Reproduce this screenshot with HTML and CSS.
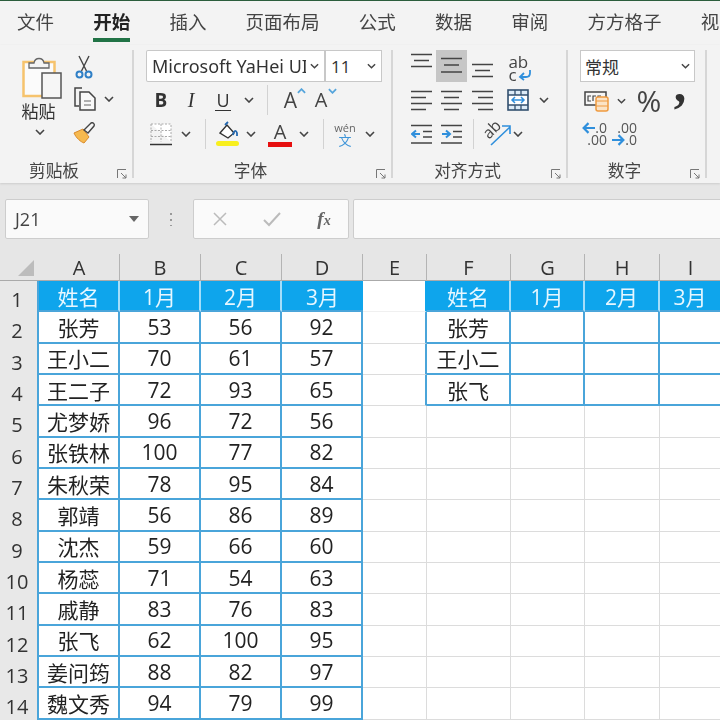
FILE: index.html
```html
<!DOCTYPE html>
<html lang="zh-CN">
<head>
    <meta charset="UTF-8">
    <meta name="viewport" content="width=device-width, initial-scale=1.0">
    <title>Excel</title>
    <link rel="stylesheet" href="styles.css">
</head>
<body>
    <svg class="defs" width="0" height="0">
        <symbol id="chev" viewBox="0 0 10 6"><polyline points="1,1 5,5 9,1" fill="none" stroke="#444" stroke-width="1.6"/></symbol>
        <symbol id="launch" viewBox="0 0 10 10"><path d="M.5 9V.5H9M4 4l5 5M9 5.5V9H5.5" fill="none" stroke="#777" stroke-width="1"/></symbol>
    </svg>

    <div class="tabs">
        <span>文件</span><span class="tab-on">开始</span><span>插入</span><span>页面布局</span><span>公式</span><span>数据</span><span>审阅</span><span>方方格子</span><span>视图</span>
    </div>

    <div class="ribbon">
        <!-- 剪贴板 -->
        <section class="group g-clip">
            <div class="clip-body">
                <div class="paste">
                    <svg width="46" height="46" viewBox="0 0 46 46">
                        <rect x="3.5" y="8" width="31" height="34" fill="#fbfbfb" stroke="#f6c36d" stroke-width="2.5"/>
                        <path d="M9 14V9h5c1-6 9-6 10 0h5v5z" fill="#f4f4f4" stroke="#666" stroke-width="1.3"/>
                        <rect x="22" y="19" width="19" height="25" fill="#f6f6f6" stroke="#555" stroke-width="1.5"/>
                    </svg>
                    <span class="paste-label">粘贴</span>
                    <svg class="chev" width="10" height="6"><use href="#chev"/></svg>
                </div>
                <div class="clip-tools">
                    <svg class="tool-cut" width="18" height="24" viewBox="0 0 18 24">
                        <path d="M4 1l7.5 15M14 1L6.500 16" stroke="#444" stroke-width="1.4" fill="none"/>
                        <circle cx="4.500" cy="19.500" r="3" fill="none" stroke="#2f7fc6" stroke-width="2"/>
                        <circle cx="13.500" cy="19.500" r="3" fill="none" stroke="#2f7fc6" stroke-width="2"/>
                    </svg>
                    <div class="copy-row">
                        <svg width="24" height="24" viewBox="0 0 24 24">
                            <path d="M9 1H2v18h4" fill="none" stroke="#444" stroke-width="1.5"/>
                            <path d="M7 5h9l6 6v12H7z" fill="#f8f8f8" stroke="#444" stroke-width="1.5"/>
                            <path d="M11 14h7M11 18h7" stroke="#666" stroke-width="1.2"/>
                        </svg>
                        <svg class="chev" width="10" height="6"><use href="#chev"/></svg>
                    </div>
                    <svg class="tool-brush" width="24" height="22" viewBox="0 0 24 22">
                        <path d="M1 11l9-4 6 8-5 6C8 20 3 16 1 11z" fill="#f6b94f" stroke="#d98a2b" stroke-width="1"/>
                        <path d="M11 8l7-7c2-1 4 1 3 3l-6 7z" fill="#f6f6f6" stroke="#444" stroke-width="1.4"/>
                    </svg>
                </div>
            </div>
            <footer class="group-foot"><i></i><span>剪贴板</span><svg class="launch" width="10" height="10"><use href="#launch"/></svg></footer>
        </section>

        <!-- 字体 -->
        <section class="group g-font">
            <div class="font-boxes">
                <div class="box font-name"><span class="font-text">Microsoft YaHei UI</span><svg width="9" height="6"><use href="#chev"/></svg></div>
                <div class="box font-size"><span>11</span><svg width="9" height="6"><use href="#chev"/></svg></div>
            </div>
            <div class="tool-row font-row2">
                <b class="t-b">B</b>
                <span class="t-i">I</span>
                <span class="t-u">U</span>
                <svg width="10" height="6"><use href="#chev"/></svg>
                <i class="sep"></i>
                <span class="t-a">A<svg class="t-caret" width="9" height="6" viewBox="0 0 10 6"><polyline points="1,5 5,1 9,5" fill="none" stroke="#55a5dc" stroke-width="2"/></svg></span>
                <span class="t-a t-a-small">A<svg class="t-caret" width="9" height="6" viewBox="0 0 10 6"><polyline points="1,1 5,5 9,1" fill="none" stroke="#55a5dc" stroke-width="2"/></svg></span>
            </div>
            <div class="tool-row font-row3">
                <svg width="22" height="23" viewBox="0 0 22 23">
                    <path d="M1 1h20v18M1 1v18M1 7.500h20M1 13.500h20M11 1v18" fill="#fff" stroke="#aaa" stroke-width="1" stroke-dasharray="2 1.500"/>
                    <path d="M0 21.500h22" stroke="#333" stroke-width="1.500"/>
                </svg>
                <svg width="10" height="6"><use href="#chev"/></svg>
                <i class="sep"></i>
                <svg width="25" height="26" viewBox="0 0 25 26">
                    <path d="M5 12l7-8 7 8-6 5z" fill="#fff" stroke="#333" stroke-width="1.400"/>
                    <path d="M10 4l3-3M18 14c1-5 3-5 4-2v3" fill="none" stroke="#2468b0" stroke-width="1.800"/>
                    <rect x="1" y="20" width="23" height="5" rx="2.500" fill="#f8ef1e"/>
                </svg>
                <svg width="10" height="6"><use href="#chev"/></svg>
                <span class="t-color">A</span>
                <svg width="10" height="6"><use href="#chev"/></svg>
                <i class="sep"></i>
                <span class="t-wen"><span>wén</span><em>文</em></span>
                <svg width="10" height="6"><use href="#chev"/></svg>
            </div>
            <footer class="group-foot"><i></i><span>字体</span><svg class="launch" width="10" height="10"><use href="#launch"/></svg></footer>
        </section>

        <!-- 对齐方式 -->
        <section class="group g-align">
            <div class="tool-row align-row1">
                <svg width="21" height="32" viewBox="0 0 21 32"><path d="M0 4.500h21M3 10.500h15M0 16.500h21" stroke="#444" stroke-width="1.500"/></svg>
                <span class="align-on"><svg width="21" height="32" viewBox="0 0 21 32"><path d="M0 8.500h21M3 15h15M0 22h21" stroke="#444" stroke-width="1.500"/></svg></span>
                <svg width="21" height="32" viewBox="0 0 21 32"><path d="M0 14.500h21M3 20.500h15M0 26.500h21" stroke="#444" stroke-width="1.500"/></svg>
                <span class="t-wrap"><span>ab</span><span class="wrap-c">c<svg width="14" height="12" viewBox="0 0 14 12"><path d="M12 1v3c0 3-2 4-4 4H2M6 4L2 8l4 3" fill="none" stroke="#2f8fdc" stroke-width="1.800"/></svg></span></span>
            </div>
            <div class="tool-row align-row2">
                <svg width="21" height="22" viewBox="0 0 21 22"><path d="M0 2.500h21M0 8.500h15M0 14.500h21M0 20.500h15" stroke="#444" stroke-width="1.500"/></svg>
                <svg width="21" height="22" viewBox="0 0 21 22"><path d="M0 2.500h21M3 8.500h15M0 14.500h21M3 20.500h15" stroke="#444" stroke-width="1.500"/></svg>
                <svg width="21" height="22" viewBox="0 0 21 22"><path d="M0 2.500h21M6 8.500h15M0 14.500h21M6 20.500h15" stroke="#444" stroke-width="1.500"/></svg>
                <svg width="22" height="22" viewBox="0 0 22 22">
                    <rect x="1" y="1" width="20" height="20" fill="#dcebf7" stroke="#33506f" stroke-width="1.600"/>
                    <rect x="2" y="6" width="18" height="10" fill="#fff"/>
                    <path d="M1 6h20M1 16h20M8 1v5M14 1v5M8 16v5M14 16v5" stroke="#33506f" stroke-width="1.300"/>
                    <path d="M5 11h12M8 8l-3 3 3 3M14 8l3 3-3 3" fill="none" stroke="#2f8fdc" stroke-width="1.500"/>
                </svg>
                <svg width="10" height="6"><use href="#chev"/></svg>
            </div>
            <div class="tool-row align-row3">
                <svg width="21" height="20" viewBox="0 0 21 20"><path d="M0 1.500h21M12 7.500h9M12 13h9M0 19h21" stroke="#444" stroke-width="1.500"/><path d="M1 10h8M5 6.500L1 10l4 3.500" fill="none" stroke="#2f8fdc" stroke-width="2"/></svg>
                <svg width="21" height="20" viewBox="0 0 21 20"><path d="M0 1.500h21M12 7.500h9M12 13h9M0 19h21" stroke="#444" stroke-width="1.500"/><path d="M1 10h8M5 6.500L9 10l-4 3.500" fill="none" stroke="#2f8fdc" stroke-width="2"/></svg>
                <i class="sep"></i>
                <span class="t-orient"><span>ab</span><svg width="22" height="22" viewBox="0 0 22 22"><path d="M1 21L20 3M12 2h8v8" fill="none" stroke="#2f8fdc" stroke-width="1.600"/></svg></span>
                <svg width="10" height="6"><use href="#chev"/></svg>
            </div>
            <footer class="group-foot"><i></i><span>对齐方式</span><svg class="launch" width="10" height="10"><use href="#launch"/></svg></footer>
        </section>

        <!-- 数字 -->
        <section class="group g-num">
            <div class="box num-format"><span>常规</span><svg width="9" height="6"><use href="#chev"/></svg></div>
            <div class="tool-row num-row2">
                <svg width="25" height="23" viewBox="0 0 25 23">
                    <rect x="1" y="3" width="21" height="13" fill="#f6f6f6" stroke="#444" stroke-width="1.500"/>
                    <path d="M7 7H4v5h3M12 7H9v5M17 7h-3v5" fill="none" stroke="#444" stroke-width="1.200"/>
                    <rect x="12" y="8" width="12" height="14" rx="2" fill="#fbe3c6" stroke="#ef9a3f" stroke-width="1.500"/>
                    <path d="M12 12h12M12 17h12" stroke="#ef9a3f" stroke-width="1.200"/>
                </svg>
                <svg width="9" height="6"><use href="#chev"/></svg>
                <span class="t-pct">%</span>
                <span class="t-comma">,</span>
            </div>
            <div class="tool-row num-row3">
                <span class="t-dec"><span class="dec-top"><svg width="13" height="12" viewBox="0 0 12 11"><path d="M12 5.500H2M6 1L1.500 5.500 6 10" fill="none" stroke="#2f8fdc" stroke-width="2"/></svg>.0</span><span>.00</span></span>
                <span class="t-dec t-dec-right"><span>.00</span><span class="dec-top"><svg width="13" height="12" viewBox="0 0 12 11"><path d="M0 5.500h10M6 1l4.500 4.500L6 10" fill="none" stroke="#2f8fdc" stroke-width="2"/></svg>.0</span></span>
            </div>
            <footer class="group-foot"><i></i><span>数字</span><svg class="launch" width="10" height="10"><use href="#launch"/></svg></footer>
        </section>
    </div>

    <div class="formula-bar">
        <div class="name-box"><span>J21</span><i class="down-arrow"></i></div>
        <div class="dots"></div>
        <div class="fx-buttons">
            <svg width="16" height="16" viewBox="0 0 16 16"><path d="M2 2l12 12M14 2L2 14" stroke="#bbb" stroke-width="1.500"/></svg>
            <svg width="20" height="16" viewBox="0 0 20 16"><path d="M2 9l5 5L18 2" fill="none" stroke="#bbb" stroke-width="2"/></svg>
            <span class="fx"><i>f</i><i>x</i></span>
        </div>
        <div class="fx-input"></div>
    </div>

    <div class="sheet">
        <div class="corner"><i></i></div>
        <div class="col">A</div><div class="col">B</div><div class="col">C</div><div class="col">D</div><div class="col">E</div><div class="col">F</div><div class="col">G</div><div class="col">H</div><div class="col">I</div>

        <div class="row">1</div>
        <div class="c th">姓名</div><div class="c th">1月</div><div class="c th">2月</div><div class="c th th-end">3月</div>
        <div class="c e-top"></div>
        <div class="c th">姓名</div><div class="c th">1月</div><div class="c th">2月</div><div class="c th">3月</div>

        <div class="row">2</div>
        <div class="c t">张芳</div><div class="c t">53</div><div class="c t">56</div><div class="c t">92</div>
        <div class="c e-edge"></div>
        <div class="c t">张芳</div><div class="c t"></div><div class="c t"></div><div class="c t"></div>

        <div class="row">3</div>
        <div class="c t">王小二</div><div class="c t">70</div><div class="c t">61</div><div class="c t">57</div>
        <div class="c e-edge"></div>
        <div class="c t">王小二</div><div class="c t"></div><div class="c t"></div><div class="c t"></div>

        <div class="row">4</div>
        <div class="c t">王二子</div><div class="c t">72</div><div class="c t">93</div><div class="c t">65</div>
        <div class="c e-edge"></div>
        <div class="c t">张飞</div><div class="c t"></div><div class="c t"></div><div class="c t"></div>

        <div class="row">5</div>
        <div class="c t">尤梦娇</div><div class="c t">96</div><div class="c t">72</div><div class="c t">56</div>
        <div class="c"></div><div class="c"></div><div class="c"></div><div class="c"></div><div class="c"></div>

        <div class="row">6</div>
        <div class="c t">张铁林</div><div class="c t">100</div><div class="c t">77</div><div class="c t">82</div>
        <div class="c"></div><div class="c"></div><div class="c"></div><div class="c"></div><div class="c"></div>

        <div class="row">7</div>
        <div class="c t">朱秋荣</div><div class="c t">78</div><div class="c t">95</div><div class="c t">84</div>
        <div class="c"></div><div class="c"></div><div class="c"></div><div class="c"></div><div class="c"></div>

        <div class="row">8</div>
        <div class="c t">郭靖</div><div class="c t">56</div><div class="c t">86</div><div class="c t">89</div>
        <div class="c"></div><div class="c"></div><div class="c"></div><div class="c"></div><div class="c"></div>

        <div class="row">9</div>
        <div class="c t">沈杰</div><div class="c t">59</div><div class="c t">66</div><div class="c t">60</div>
        <div class="c"></div><div class="c"></div><div class="c"></div><div class="c"></div><div class="c"></div>

        <div class="row">10</div>
        <div class="c t">杨蕊</div><div class="c t">71</div><div class="c t">54</div><div class="c t">63</div>
        <div class="c"></div><div class="c"></div><div class="c"></div><div class="c"></div><div class="c"></div>

        <div class="row">11</div>
        <div class="c t">戚静</div><div class="c t">83</div><div class="c t">76</div><div class="c t">83</div>
        <div class="c"></div><div class="c"></div><div class="c"></div><div class="c"></div><div class="c"></div>

        <div class="row">12</div>
        <div class="c t">张飞</div><div class="c t">62</div><div class="c t">100</div><div class="c t">95</div>
        <div class="c"></div><div class="c"></div><div class="c"></div><div class="c"></div><div class="c"></div>

        <div class="row">13</div>
        <div class="c t">姜问筠</div><div class="c t">88</div><div class="c t">82</div><div class="c t">97</div>
        <div class="c"></div><div class="c"></div><div class="c"></div><div class="c"></div><div class="c"></div>

        <div class="row">14</div>
        <div class="c t">魏文秀</div><div class="c t">94</div><div class="c t">79</div><div class="c t">99</div>
        <div class="c"></div><div class="c"></div><div class="c"></div><div class="c"></div><div class="c"></div>
    </div>
</body>
</html>
```

FILE: styles.css
```css
* {
    box-sizing: border-box;
}
html, body {
    margin: 0;
    height: 720px;
    overflow: hidden;
}
body {
    width: 720px;
    background: #e6e6e6;
    color: #333;
    font-family: "Open Sans", "Noto Sans CJK SC", sans-serif;
    filter: blur(.35px);
}
.defs {
    position: absolute;
}
svg {
    display: block;
}

/* tabs */
.tabs {
    height: 45px;
    display: flex;
    gap: 39.2px;
    padding: 5px 0 0 17px;
    border-top: 1px solid #2b5d3c;
    background: #f3f3f3;
    font-family: "Noto Sans CJK SC", sans-serif;
    font-size: 18.500px;
    line-height: 30px;
    color: #444;
    white-space: nowrap;
}
.tabs span {
    flex: none;
    height: 36px;
}
.tabs .tab-on {
    font-weight: 700;
    color: #222;
    border-bottom: 4px solid #217346;
}

/* ribbon */
.ribbon {
    height: 138px;
    display: flex;
    padding: 5px 0 5px;
    background: #f3f3f3;
    box-shadow: 0 1px 2px #ccc;
    position: relative;
}
.group {
    flex: none;
    display: grid;
    grid-template-rows: 33px 34px 34px 1fr;
    border-right: 2px solid #d6d6d6;
}
.g-clip { width: 134px; grid-template-rows: 1fr 27px; }
.g-font { width: 259px; padding-left: 12px; }
.g-align { width: 175px; padding-left: 13px; }
.g-num { width: 139px; padding-left: 12px; }

.group-foot {
    display: grid;
    grid-template-columns: 1fr auto 1fr;
    align-items: center;
    align-self: end;
    margin-bottom: -3px;
    padding: 0 5px 0 0;
    font-family: "Noto Sans CJK SC", sans-serif;
    font-size: 16.700px;
    line-height: 22px;
    color: #444;
}
.group-foot span {
    margin-right: 19px;
}
.g-font .group-foot, .g-num .group-foot {
    margin-left: -12px;
}
.g-align .group-foot {
    margin-left: -13px;
}
.launch {
    justify-self: end;
    margin-top: 8px;
}

/* clipboard */
.clip-body {
    display: flex;
    padding: 4px 0 0 20px;
}
.paste {
    width: 46px;
    display: flex;
    flex-direction: column;
    align-items: center;
}
.paste-label {
    font-family: "Noto Sans CJK SC", sans-serif;
    font-size: 17px;
    line-height: 24px;
    margin: -1px 9px 0 0;
}
.paste .chev {
    margin: 6px 6px 0 0;
}
.clip-tools {
    display: flex;
    flex-direction: column;
    align-items: flex-start;
    gap: 8px;
    margin: 1px 0 0 5px;
}
.tool-cut {
    margin-left: 4px;
}
.tool-brush {
    margin: 3px 0 0 2px;
}
.copy-row {
    display: flex;
    align-items: center;
    gap: 7px;
    margin-left: 2px;
}

/* boxes */
.box {
    height: 32px;
    display: flex;
    align-items: center;
    justify-content: space-between;
    background: #fff;
    border: 1px solid #c8c8c8;
    font-size: 17px;
}
.font-boxes {
    display: flex;
    width: 236px;
}
.font-name {
    width: 180px;
    padding: 0 5px;
    border-right: 2px solid #c8c8c8;
    border-radius: 2px 0 0 2px;
    font-family: "Noto Sans", sans-serif;
    font-size: 18px;
}
.font-text {
    width: 154px;
    overflow: hidden;
    white-space: nowrap;
}
.font-size {
    width: 56px;
    padding: 0 5px;
    border-left: 0;
}
.num-format {
    width: 115px;
    padding: 0 4px;
    font-family: "Noto Sans CJK SC", sans-serif;
}

/* tool rows */
.tool-row {
    display: grid;
    align-items: center;
    justify-items: center;
}
.font-row2 { grid-template-columns: 30px 30px 34px 18px 18px 29px 32px; }
.font-row3 { grid-template-columns: 30px 20px 18px 26px 22px 36px 12px 26px 18px 32px; }
.align-row1 { grid-template-columns: 30px 31px 31px 44px; align-items: start; }
.align-row2 { grid-template-columns: 30px 31px 31px 40px 12px; }
.align-row3 { grid-template-columns: 30px 31px 12px 36px 6px; }
.num-row2 { grid-template-columns: 32px 18px 38px 24px; padding-top: 1px; }
.num-row3 { display: flex; gap: 2px; padding-left: 3px; }

.sep {
    width: 1px;
    height: 30px;
    background: #d2d2d2;
}
.t-b {
    font-size: 19px;
    color: #333;
}
.t-i {
    font-family: "Liberation Serif", serif;
    font-style: italic;
    font-size: 20px;
}
.t-u {
    font-size: 18px;
    line-height: 20px;
    border-bottom: 1.500px solid #333;
    padding: 0 1px;
}
.t-a {
    position: relative;
    font-size: 21px;
    line-height: 26px;
    color: #444;
}
.t-a-small {
    font-size: 20px;
}
.t-caret {
    position: absolute;
    top: 1px;
    left: 13px;
}
.t-color {
    font-size: 20px;
    line-height: 21px;
    width: 24px;
    text-align: center;
    color: #444;
    border-bottom: 5px solid #e60f0f;
}
.t-wen {
    display: flex;
    flex-direction: column;
    align-items: center;
    font-size: 11px;
    line-height: 12px;
    color: #666;
}
.t-wen em {
    font-family: "Noto Sans CJK SC", sans-serif;
    font-style: normal;
    font-size: 13px;
    color: #3f95d8;
}
.align-on {
    width: 31px;
    height: 32px;
    display: flex;
    justify-content: center;
    background: #c6c6c6;
}
.t-wrap {
    display: flex;
    flex-direction: column;
    align-items: flex-start;
    font-size: 17px;
    line-height: 13px;
    padding-top: 5px;
    color: #444;
}
.wrap-c {
    display: flex;
    align-items: center;
    gap: 1px;
}
.t-orient {
    position: relative;
    width: 26px;
    height: 24px;
    font-size: 16px;
    color: #444;
}
.t-orient span {
    position: absolute;
    left: -2px;
    top: -4px;
    transform: rotate(-45deg);
}
.t-orient svg {
    position: absolute;
    left: 6px;
    top: 2px;
}
.t-pct {
    font-size: 30px;
    line-height: 30px;
    color: #444;
}
.t-comma {
    font-family: "Liberation Serif", serif;
    font-weight: 700;
    font-size: 50px;
    line-height: 30px;
    height: 30px;
    margin-top: -34px;
    color: #333;
}
.t-dec {
    display: flex;
    flex-direction: column;
    align-items: flex-end;
    width: 24px;
    font-size: 14px;
    line-height: 12px;
    color: #555;
}
.t-dec-right {
    width: 28px;
}
.dec-top {
    display: flex;
    align-items: center;
}

/* formula bar */
.formula-bar {
    height: 71px;
    display: flex;
    align-items: flex-start;
    padding: 16px 0 0 5px;
}
.name-box, .fx-buttons, .fx-input {
    height: 40px;
    background: #fafafa;
    border: 1px solid #cdcdcd;
    border-radius: 2px;
}
.name-box {
    width: 144px;
    display: flex;
    align-items: center;
    justify-content: space-between;
    padding: 0 9px;
    font-size: 18px;
    color: #444;
}
.down-arrow {
    width: 0;
    height: 0;
    border-left: 5px solid transparent;
    border-right: 5px solid transparent;
    border-top: 6px solid #666;
}
.dots {
    width: 44px;
    height: 15px;
    margin-top: 12px;
    background: radial-gradient(circle, #999 1px, transparent 1.500px) center top / 4px 6px repeat-y;
}
.fx-buttons {
    width: 156px;
    display: grid;
    grid-template-columns: 52px 52px 52px;
    justify-items: center;
    align-items: center;
}
.fx {
    font-family: "Liberation Serif", serif;
    font-weight: 700;
    font-size: 19px;
    color: #666;
}
.fx i + i {
    font-size: 14px;
}
.fx-input {
    flex: 1;
    margin: 0 -4px 0 4px;
}

/* sheet */
.sheet {
    display: grid;
    grid-template-columns: 39px 81px 81px 81px 81px 64px 84px 74px 75px 62px;
    grid-template-rows: 27px repeat(14, 31.350px);
    background: #fff;
    font-family: "Open Sans", "Noto Sans CJK SC", sans-serif;
    font-size: 21px;
    color: #222;
}
.corner {
    background: #e6e6e6;
    border-bottom: 1px solid #aaa;
    display: flex;
    justify-content: flex-end;
    align-items: flex-end;
    padding: 0 5px 4px 0;
}
.corner i {
    width: 0;
    height: 0;
    border-style: solid;
    border-width: 0 0 16px 16px;
    border-color: transparent transparent #bcbcbc transparent;
}
.col {
    background: #e6e6e6;
    border-right: 1px solid #b4b4b4;
    border-bottom: 1px solid #aaa;
    text-align: center;
    font-size: 20px;
    line-height: 27px;
    color: #333;
}
.row {
    background: #e8e8e8;
    border-right: 2px solid #4aa5da;
    text-align: center;
    padding: 6px 3px 0 0;
    font-size: 20px;
    line-height: 25px;
    color: #333;
}
.c {
    display: flex;
    align-items: center;
    justify-content: center;
    border-right: 1px solid #dcdcdc;
    border-bottom: 1px solid #dcdcdc;
    white-space: nowrap;
}
.t {
    border-right: 2px solid #4aa5da;
    border-bottom: 2px solid #4aa5da;
}
.th {
    background: #0ea5ec;
    color: #e6f7ff;
    border-right: 2px solid #a4defa;
    border-bottom: 2px solid #4aa5da;
}
.th-end {
    border-right: 0;
}
.e-top {
    border-right: 2px solid #0ea5ec;
    border-bottom: 1px solid #f0f0f0;
}
.e-edge {
    border-right: 2px solid #4aa5da;
}
```
